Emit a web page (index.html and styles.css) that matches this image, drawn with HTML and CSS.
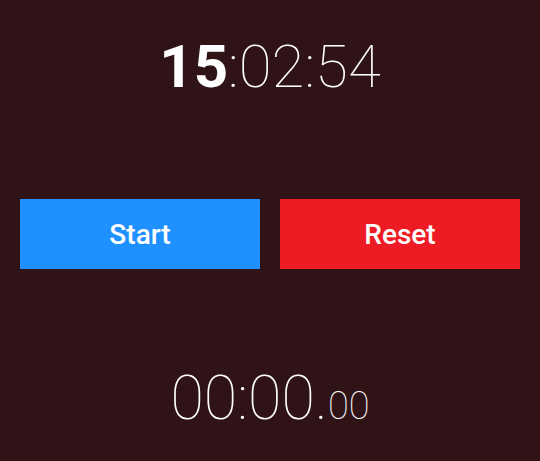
FILE: index.html
```html
<!DOCTYPE html>
<html>
<head>
<meta charset="utf-8">
<link rel="stylesheet" href="styles.css">
</head>
<body>
<div class="app">
  <div class="clock"><span class="hours">15</span>:02:54</div>
  <div class="buttons">
    <button class="btn start">Start</button>
    <button class="btn reset">Reset</button>
  </div>
  <div class="stopwatch">00:00.<span class="ms">00</span></div>
</div>
</body>
</html>
```
FILE: styles.css
```css
html, body {
  margin: 0;
  padding: 0;
  background: #2f1317;
  height: 100%;
}
.app {
  display: flex;
  flex-direction: column;
  font-family: Roboto, "Liberation Sans", sans-serif;
  color: #ffffff;
}
.clock {
  margin-top: 37px;
  text-align: center;
  font-size: 60px;
  line-height: 60px;
  font-weight: 100;
}
.hours {
  font-weight: 700;
}
.buttons {
  display: flex;
  gap: 20px;
  padding: 0 20px;
  margin-top: 102px;
}
.btn {
  flex: 1;
  height: 70px;
  border: none;
  border-radius: 0;
  color: #ffffff;
  font-family: Roboto, "Liberation Sans", sans-serif;
  font-size: 28px;
  font-weight: 500;
  padding: 0;
}
.start { background: #1e90ff; }
.reset { background: #ed1c24; }
.stopwatch {
  margin-top: 99px;
  text-align: center;
  font-size: 61px;
  line-height: 61px;
  font-weight: 100;
}
.ms {
  font-size: 38px;
  line-height: 1;
}
```
